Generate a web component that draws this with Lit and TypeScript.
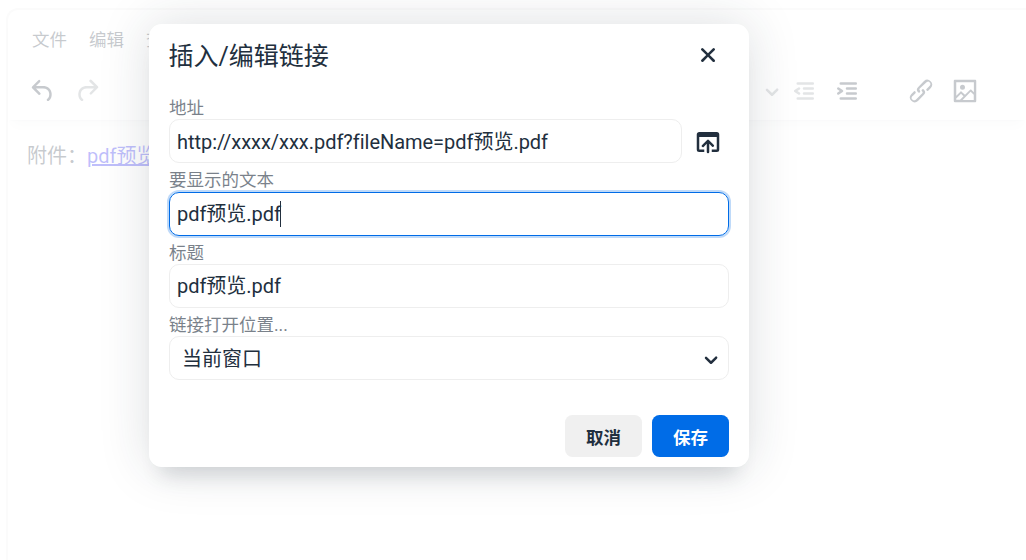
import { LitElement, html, css, svg } from "lit";
import { customElement } from "lit/decorators.js";

const ICONS: Record<string, string> = {
  undo: "M6.4 8H12c3.7 0 6.2 2 6.8 5.1.6 2.7-.4 5.6-2.3 6.8a1 1 0 0 1-1-1.8c1.1-.6 1.8-2.7 1.4-4.6-.5-2.1-2.1-3.5-4.9-3.5H6.4l3.3 3.3a1 1 0 1 1-1.4 1.4l-5-5a1 1 0 0 1 0-1.4l5-5a1 1 0 0 1 1.4 1.4L6.4 8Z",
  redo: "M17.6 10H12c-2.8 0-4.4 1.4-4.9 3.5-.4 2 .3 4 1.4 4.6a1 1 0 1 1-1 1.8c-2-1.2-2.9-4.1-2.3-6.8.6-3 3-5.1 6.8-5.1h5.6l-3.3-3.3a1 1 0 1 1 1.4-1.4l5 5a1 1 0 0 1 0 1.4l-5 5a1 1 0 0 1-1.4-1.4l3.3-3.3Z",
  indent: "M7 5h12c.6 0 1 .4 1 1s-.4 1-1 1H7a1 1 0 1 1 0-2Zm5 4h7c.6 0 1 .4 1 1s-.4 1-1 1h-7a1 1 0 0 1 0-2Zm0 4h7c.6 0 1 .4 1 1s-.4 1-1 1h-7a1 1 0 0 1 0-2Zm-5 4h12a1 1 0 0 1 0 2H7a1 1 0 0 1 0-2Zm-2.6-3.8L6.2 12l-1.8-1.2a1 1 0 0 1 1.2-1.6l3 2a1 1 0 0 1 0 1.6l-3 2a1 1 0 1 1-1.2-1.6Z",
  outdent: "M7 5h12c.6 0 1 .4 1 1s-.4 1-1 1H7a1 1 0 1 1 0-2Zm5 4h7c.6 0 1 .4 1 1s-.4 1-1 1h-7a1 1 0 0 1 0-2Zm0 4h7c.6 0 1 .4 1 1s-.4 1-1 1h-7a1 1 0 0 1 0-2Zm-5 4h12a1 1 0 0 1 0 2H7a1 1 0 0 1 0-2Zm1.6-3.8a1 1 0 0 1-1.2 1.6l-3-2a1 1 0 0 1 0-1.6l3-2a1 1 0 0 1 1.2 1.6L6.8 12l1.8 1.2Z",
  link: "M6.2 12.3a1 1 0 0 1 1.4 1.4l-2 2a2 2 0 1 0 2.6 2.8l4.8-4.8a1 1 0 0 0 0-1.4 1 1 0 1 1 1.4-1.3 2.9 2.9 0 0 1 0 4L9.6 20a3.9 3.9 0 0 1-5.5-5.5l2-2Zm11.6-.6a1 1 0 0 1-1.4-1.4l2-2a2 2 0 1 0-2.6-2.8L11 10a1 1 0 0 0 0 1.4A1 1 0 1 1 9.6 13a2.9 2.9 0 0 1 0-4L14.4 4a3.9 3.9 0 0 1 5.5 5.5l-2 2Z",
  image: "m5 15.7 3.3-3.2c.3-.3.7-.3 1 0L12 15l4.1-4c.3-.4.8-.4 1 0l2 1.9V5H5v10.7ZM5 18V19h3l2.8-2.9-2-2L5 17.9Zm14-3-2.5-2.4-6.4 6.5H19v-4ZM4 3h16c.6 0 1 .4 1 1v16c0 .6-.4 1-1 1H4a1 1 0 0 1-1-1V4c0-.6.4-1 1-1Zm6 8a2 2 0 1 1 0-4 2 2 0 0 1 0 4Z",
  close: "M17.3 8.2 13.4 12l3.9 3.8a1 1 0 0 1-1.5 1.5L12 13.4l-3.8 3.9a1 1 0 0 1-1.5-1.5l3.9-3.8-3.9-3.8a1 1 0 0 1 1.5-1.5l3.8 3.9 3.8-3.9a1 1 0 0 1 1.5 1.5Z",
  browse: "M19 4a2 2 0 0 1 2 2v12a2 2 0 0 1-2 2h-4v-2h4V8H5v10h4v2H5a2 2 0 0 1-2-2V6c0-1.1.9-2 2-2h14Zm-8 9.4-2.3 2.3a1 1 0 1 1-1.4-1.4l4-4a1 1 0 0 1 1.4 0l4 4a1 1 0 0 1-1.4 1.4L13 13.4V20a1 1 0 0 1-2 0v-6.6Z",
  chevron: "M7.3 10.3a1 1 0 0 1 1.4 0L12 13.6l3.3-3.3a1 1 0 1 1 1.4 1.4l-4 4a1 1 0 0 1-1.4 0l-4-4a1 1 0 0 1 0-1.4Z",
};

const icon = (name: string, cls = "") =>
  html`<svg class="icon ${cls}" viewBox="0 0 24 24" aria-hidden="true">${svg`<path d=${ICONS[name]}></path>`}</svg>`;

@customElement("app-root")
export class AppRoot extends LitElement {
  static styles = css`
    :host {
      display: block;
      position: relative;
      width: 1026px;
      height: 560px;
      overflow: hidden;
      background: #fff;
      color: #222f3e;
      font-family: Roboto, "Noto Sans CJK SC", sans-serif;
    }
    .icon { display: block; width: 30px; height: 30px; fill: #222f3e; flex: none; }
    .editor {
      margin: 8px 0 0 6px;
      height: 560px;
      border: 2px solid #eee;
      border-right: 0;
      border-radius: 12px 0 0 0;
      box-sizing: border-box;
    }
    .header {
      height: 110px;
      box-shadow: 0 2px 2px -2px rgba(34,47,62,.1), 0 10px 10px -5px rgba(34,47,62,.07);
      box-sizing: border-box;
    }
    .menu { display: flex; gap: 22px; padding: 20px 0 0 24px; font-size: 17.5px; line-height: 20px; }
    .tools { display: flex; align-items: center; padding: 26px 0 0 20px; }
    .tools .disabled { opacity: .5; }
    .tools .spacer { flex: none; }
    .s1 { width: 14px; }
    .s2 { width: 655px; }
    .s3 { width: 2px; }
    .s5 { width: 13px; }
    .s4 { width: 44px; }
    .s6 { width: 14px; }
    .content { padding: 23px 19px; font-size: 20px; line-height: 26px; }
    .content a { color: #00e; }
    .overlay {
      position: absolute;
      inset: 0;
      background: rgba(255,255,255,.75);
      padding: 24px 0 0 149px;
      box-sizing: border-box;
    }
    .dialog {
      width: 600px;
      height: 443px;
      background: #fff;
      border-radius: 12.5px;
      box-shadow: 0 20px 20px -12px rgba(34,47,62,.15), 0 0 50px 1px rgba(34,47,62,.15);
      display: flex;
      flex-direction: column;
      box-sizing: border-box;
    }
    .head {
      display: flex;
      align-items: center;
      justify-content: space-between;
      padding: 0 26px 0 19.5px;
      height: 62px;
      flex: none;
    }
    .title { font-size: 25px; line-height: 32px; margin-top: 4px; }
    .body { padding: 5px 20px 0; flex: 1; }
    .label {
      font-size: 17.5px;
      line-height: 23.2px;
      height: 28.3px;
      color: #222f3e;
      opacity: .6;
      padding-top: 6px;
      box-sizing: border-box;
      white-space: nowrap;
    }
    .row { display: flex; align-items: center; gap: 11px; }
    .input {
      flex: 1;
      height: 44px;
      box-sizing: border-box;
      border: 1.25px solid #eee;
      border-radius: 10px;
      padding: 1px 7px 0;
      font-size: 20px;
      line-height: 42px;
      letter-spacing: -0.03px;
      display: flex;
      align-items: center;
      white-space: nowrap;
    }
    .input.focus {
      border-color: #006ce7;
      box-shadow: 0 0 0 2px rgba(0,108,231,.25);
    }
    .caret { display: inline-block; width: 1px; height: 26px; background: #222f3e; margin-left: -1px; }
    .select { padding: 1px 2px 0 12px; justify-content: space-between; color: #222f3e; }
    .browse { margin: 2px 6px 0 0; }
    .foot { display: flex; justify-content: flex-end; gap: 10px; padding: 0 20px 10px; flex: none; }
    .btn {
      width: 77px;
      height: 42px;
      border-radius: 7.5px;
      font-size: 17.5px;
      font-weight: 700;
      display: flex;
      align-items: center;
      justify-content: center;
    }
    .cancel { background: #f0f0f0; color: #222f3e; }
    .save { background: #006ce7; color: #fff; }
  `;

  render() {
    return html`
      <div class="editor">
        <div class="header">
          <div class="menu"><span>文件</span><span>编辑</span><span>查看</span></div>
          <div class="tools">
            ${icon("undo")}<span class="spacer s1"></span>${icon("redo", "disabled")}
            <span class="spacer s2"></span>
            ${icon("chevron", "disabled")}<span class="spacer s3"></span>
            ${icon("outdent", "disabled")}<span class="spacer s5"></span>
            ${icon("indent")}<span class="spacer s4"></span>
            ${icon("link")}<span class="spacer s6"></span>
            ${icon("image")}
          </div>
        </div>
        <div class="content">附件：<a href="#">pdf预览.pdf</a></div>
      </div>
      <div class="overlay">
        <div class="dialog" role="dialog">
          <div class="head">
            <div class="title">插入/编辑链接</div>
            ${icon("close")}
          </div>
          <div class="body">
            <div class="label">地址</div>
            <div class="row">
              <div class="input">http://xxxx/xxx.pdf?fileName=pdf预览.pdf</div>
              <span class="browse">${icon("browse")}</span>
            </div>
            <div class="label">要显示的文本</div>
            <div class="input focus">pdf预览.pdf<span class="caret"></span></div>
            <div class="label">标题</div>
            <div class="input">pdf预览.pdf</div>
            <div class="label">链接打开位置...</div>
            <div class="input select"><span>当前窗口</span>${icon("chevron")}</div>
          </div>
          <div class="foot">
            <div class="btn cancel">取消</div>
            <div class="btn save">保存</div>
          </div>
        </div>
      </div>
    `;
  }
}
